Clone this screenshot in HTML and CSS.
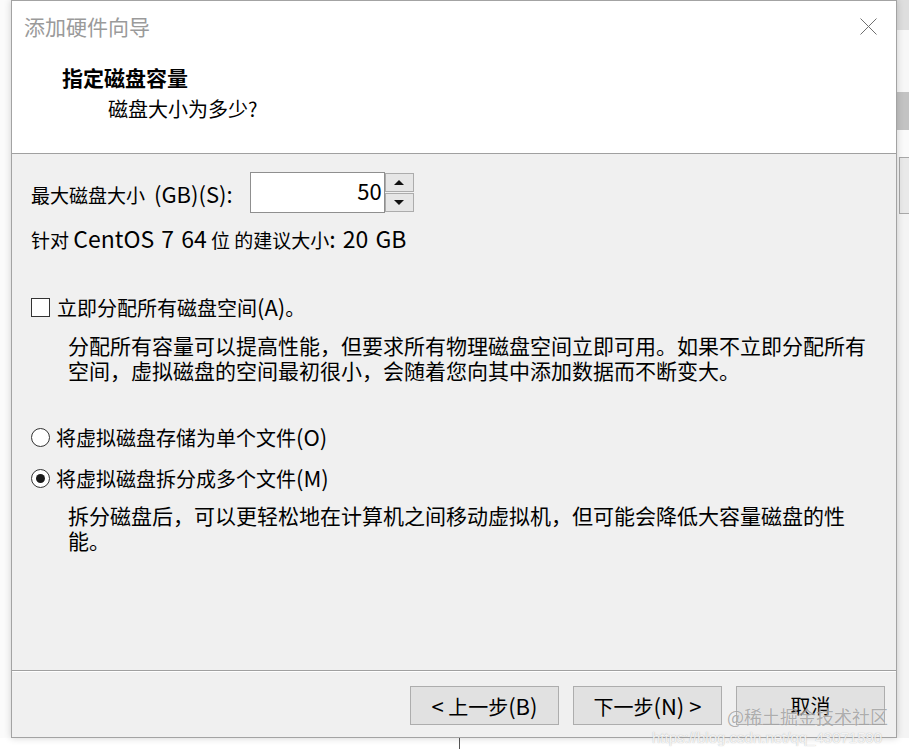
FILE: index.html
```html
<!DOCTYPE html>
<html lang="zh-CN">
<head>
<meta charset="utf-8">
<title>添加硬件向导</title>
<link rel="stylesheet" href="styles.css">
</head>
<body>
<div class="screen">
  <div class="dialog">
    <div class="top">
      <div class="titlebar">
        <span class="title">添加硬件向导</span>
        <svg class="close" width="17" height="17" viewBox="0 0 17 17"><path d="M0.5 0.5 L16.5 16.5 M16.5 0.5 L0.5 16.5" stroke="#6f6f6f" stroke-width="1" fill="none"/></svg>
      </div>
      <div class="header">
        <div class="h1">指定磁盘容量</div>
        <div class="h2">磁盘大小为多少?</div>
      </div>
    </div>
    <div class="body">
      <div class="size-row">
        <span class="label">最大磁盘大小<span class="lat gap">(GB)(S):</span></span>
        <div class="spin">
          <div class="spin-input">50</div>
          <div class="spin-btns">
            <div class="spin-btn"><span class="tri-up"></span></div>
            <div class="spin-btn"><span class="tri-down"></span></div>
          </div>
        </div>
      </div>
      <div class="rec">针对 <span class="lat ws">CentOS 7 64</span> 位 的建议大小<span class="lat ws">: 20 GB</span></div>
      <div class="opt check-opt"><span class="checkbox"></span><span>立即分配所有磁盘空间<span class="lat2">(A)</span>。</span></div>
      <p class="desc desc1">分配所有容量可以提高性能，但要求所有物理磁盘空间立即可用。如果不立即分配所有<br>空间，虚拟磁盘的空间最初很小，会随着您向其中添加数据而不断变大。</p>
      <div class="opt radio-opt first"><span class="radio"></span><span>将虚拟磁盘存储为单个文件<span class="lat2">(O)</span></span></div>
      <div class="opt radio-opt second"><span class="radio checked"></span><span>将虚拟磁盘拆分成多个文件<span class="lat2">(M)</span></span></div>
      <p class="desc desc2">拆分磁盘后，可以更轻松地在计算机之间移动虚拟机，但可能会降低大容量磁盘的性<br>能。</p>
    </div>
    <div class="footer">
      <button class="btn"><span class="blat">&lt;</span> 上一步<span class="blat">(B)</span></button>
      <button class="btn">下一步<span class="blat">(N) &gt;</span></button>
      <button class="btn">取消</button>
    </div>
  </div>
  <div class="strip">
    <div class="s1"></div>
    <div class="s2"></div>
    <div class="s3"></div>
    <div class="s4"></div>
    <div class="s5"></div>
    <div class="s6"></div>
  </div>
</div>
<div class="below"><div class="vline"></div></div>
<div class="wm1">@稀土掘金技术社区</div>
<div class="wm2">https://blog.csdn.net/qq_43071590</div>
</body>
</html>
```
FILE: styles.css
```css
html, body {
  margin: 0;
  padding: 0;
}
body {
  background: #fbfbfb;
  width: 909px;
  height: 749px;
  overflow: hidden;
  position: relative;
  font-family: "Noto Sans CJK SC", "Noto Sans", sans-serif;
  color: #000;
}
.screen {
  display: flex;
  height: 738px;
}
.dialog {
  margin-left: 11px;
  width: 886px;
  height: 738px;
  box-sizing: border-box;
  border: 1px solid #a3a3a3;
  background: #f0f0f0;
  display: flex;
  flex-direction: column;
  box-shadow: 0 0 7px rgba(0, 0, 0, 0.18);
  position: relative;
  z-index: 1;
}
.top {
  background: #fff;
  height: 152px;
  border-bottom: 1px solid #a0a0a0;
  flex: none;
}
.titlebar {
  height: 50px;
  display: flex;
  align-items: center;
  justify-content: space-between;
  padding: 0 19px 0 12px;
}
.title {
  font-size: 21px;
  color: #9a9a9a;
  line-height: 50px;
}
.close {
  display: block;
  margin-top: 1px;
}
.header {
  padding-left: 50px;
}
.h1 {
  margin-top: 12px;
  font-size: 21px;
  font-weight: bold;
  line-height: 28px;
}
.h2 {
  margin-top: 4px;
  margin-left: 46px;
  font-size: 20px;
  line-height: 28px;
}
.body {
  flex: 1;
  padding-left: 19px;
}
.lat {
  font-size: 22px;
}
.lat.gap {
  margin-left: 9px;
}
.lat.ws {
  font-size: 23px;
  word-spacing: 2px;
}
.lat2 {
  font-size: 22px;
}
.size-row {
  margin-top: 18px;
  display: flex;
  align-items: center;
  height: 41px;
}
.label {
  font-size: 19px;
  line-height: 26px;
  margin-top: 3px;
}
.spin {
  margin-left: 17px;
  display: flex;
  height: 41px;
}
.spin-input {
  width: 135px;
  box-sizing: border-box;
  height: 41px;
  border: 1px solid #8f8f8f;
  background: #fff;
  text-align: right;
  font-size: 22px;
  line-height: 34px;
  padding-right: 2px;
}
.spin-btns {
  display: flex;
  flex-direction: column;
  gap: 1px;
  padding: 1px 0;
  width: 29px;
}
.spin-btn {
  flex: 1;
  background: #e6e6e6;
  border: 1px solid #acacac;
  display: flex;
  align-items: center;
  justify-content: center;
}
.tri-up {
  width: 0;
  height: 0;
  border-left: 5px solid transparent;
  border-right: 5px solid transparent;
  border-bottom: 5px solid #111;
}
.tri-down {
  width: 0;
  height: 0;
  border-left: 5px solid transparent;
  border-right: 5px solid transparent;
  border-top: 5px solid #111;
}
.rec {
  margin-top: 12px;
  font-size: 19px;
  line-height: 26px;
}
.opt {
  display: flex;
  align-items: center;
  font-size: 20px;
  line-height: 26px;
  height: 26px;
}
.check-opt {
  margin-top: 41px;
}
.checkbox {
  width: 19px;
  height: 19px;
  box-sizing: border-box;
  border: 1px solid #333;
  background: #fff;
  margin-right: 7px;
  flex: none;
}
.radio {
  width: 19px;
  height: 19px;
  box-sizing: border-box;
  border: 1px solid #333;
  border-radius: 50%;
  background: #fff;
  margin-right: 6px;
  display: flex;
  align-items: center;
  justify-content: center;
  flex: none;
}
.radio.checked::after {
  content: "";
  width: 9px;
  height: 9px;
  border-radius: 50%;
  background: #1a1a1a;
}
.radio-opt.first {
  margin-top: 41px;
}
.radio-opt.second {
  margin-top: 15px;
}
.desc {
  margin: 0 0 0 37px;
  font-size: 21px;
  line-height: 25px;
  white-space: nowrap;
}
.desc1 {
  margin-top: 13px;
}
.desc2 {
  margin-top: 12px;
}
.footer {
  flex: none;
  height: 67px;
  box-sizing: border-box;
  border-top: 1px solid #a0a0a0;
  box-shadow: inset 0 1px 0 #fff;
  display: flex;
  justify-content: flex-end;
  align-items: flex-start;
  gap: 14px;
  padding: 15px 11px 0 0;
}
.btn {
  width: 149px;
  height: 39px;
  background: #e1e1e1;
  border: 1px solid #adadad;
  font-family: "Noto Sans CJK SC", "Noto Sans", sans-serif;
  font-size: 20px;
  color: #000;
  padding: 0;
  line-height: 36px;
}
.blat {
  font-size: 22px;
}
.strip {
  flex: 1;
  display: flex;
  flex-direction: column;
  background: #f6f6f6;
}
.s1 { height: 30px; background: #dedede; }
.s2 { height: 62px; background: #f7f7f7; }
.s3 { height: 38px; background: #c3c3c3; }
.s4 { height: 27px; background: #fafafa; }
.s5 { height: 55px; margin-left: 2px; background: #e9e9e9; border: 1px solid #a8a8a8; border-right: none; }
.s6 { flex: 1; background: #f4f4f4; }
.below {
  height: 11px;
  background: #fff;
  position: relative;
}
.vline {
  width: 1px;
  height: 11px;
  margin-left: 459px;
  background: #555;
}
.wm1 {
  position: absolute;
  left: 727px;
  top: 704px;
  z-index: 5;
  font-size: 18px;
  line-height: 24px;
  color: rgba(110, 110, 110, 0.55);
  text-shadow: 0 0 1px rgba(255, 255, 255, 0.8);
  white-space: nowrap;
}
.wm2 {
  position: absolute;
  left: 652px;
  top: 729px;
  z-index: 5;
  font-family: "Liberation Sans", sans-serif;
  font-size: 15px;
  line-height: 18px;
  color: rgba(255, 255, 255, 0.85);
  text-shadow: 0 0 1px rgba(120, 120, 120, 0.6);
  white-space: nowrap;
}
```
